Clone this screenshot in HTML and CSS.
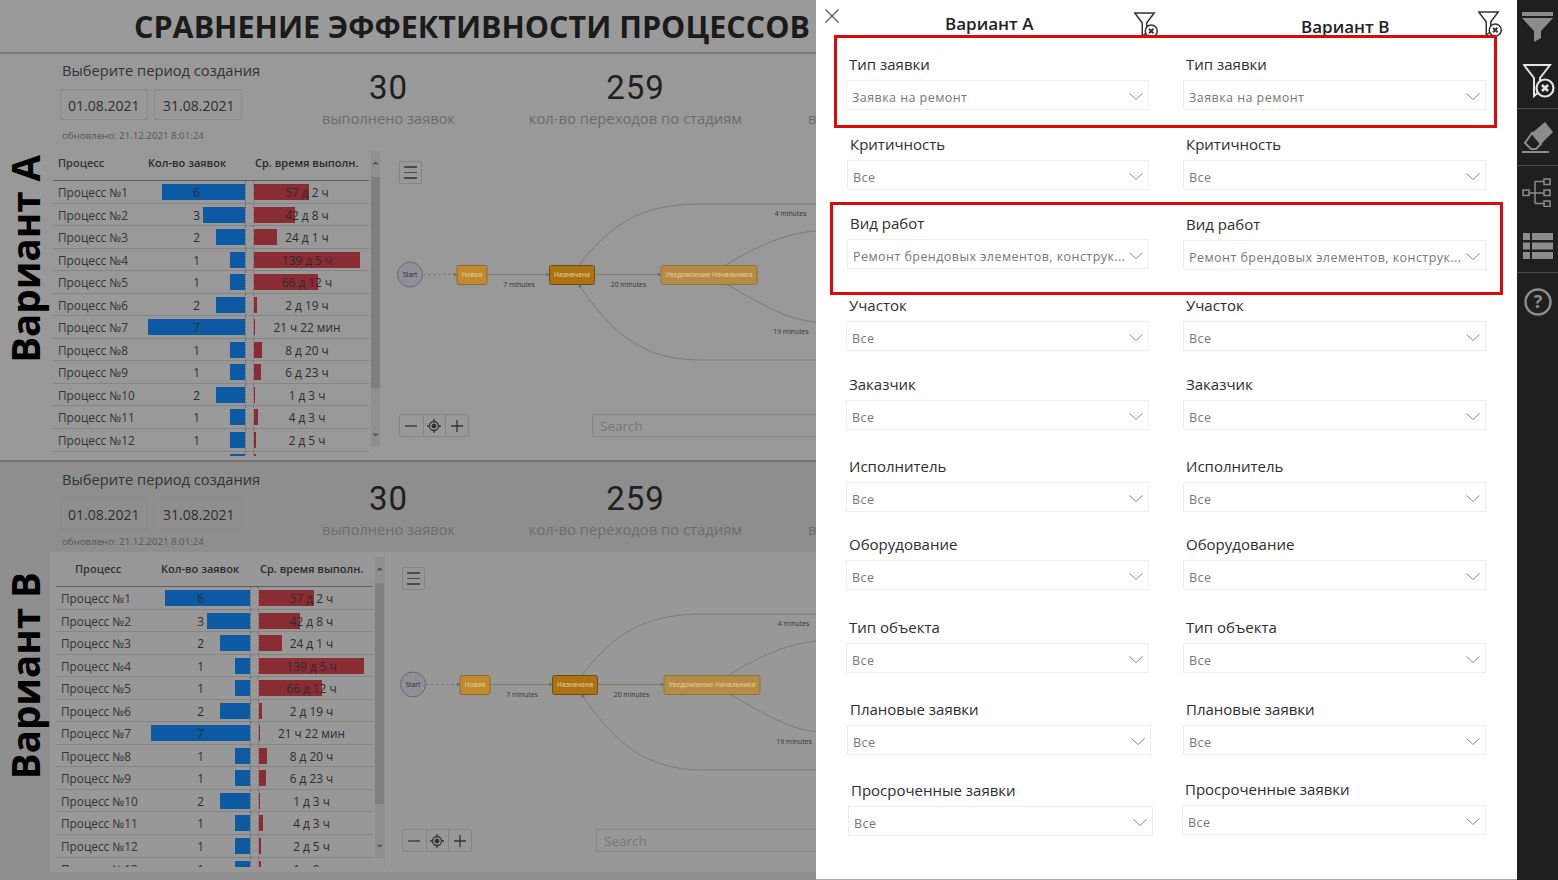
FILE: index.html
```html
<!DOCTYPE html>
<html lang="ru">
<head>
    <meta charset="UTF-8">
    <title>Сравнение эффективности процессов</title>
    <link rel="stylesheet" href="styles.css">
</head>
<body>

<div class="report">
    <h1 class="title">СРАВНЕНИЕ ЭФФЕКТИВНОСТИ ПРОЦЕССОВ</h1>

    <!-- Вариант А -->
    <section class="sec sec-a">
        <div class="side"><span>Вариант А</span></div>
        <div class="main">
            <div class="top">
                <div class="period">
                    <div class="period-label">Выберите период создания</div>
                    <div class="dates"><span class="date">01.08.2021</span><span class="date date-2">31.08.2021</span></div>
                    <div class="updated">обновлено: 21.12.2021 8:01:24</div>
                </div>
                <div class="kpi kpi-1"><div class="num">30</div><div class="cap">выполнено заявок</div></div>
                <div class="kpi kpi-2"><div class="num">259</div><div class="cap">кол-во переходов по стадиям</div></div>
                <div class="kpi kpi-3"><div class="num">&nbsp;</div><div class="cap">в</div></div>
            </div>
            <div class="body">
                <div class="tbl">
                    <div class="tbl-inner">
                        <div class="row head"><span class="name">Процесс</span><span class="hc">Кол-во заявок</span><span class="ht">Ср. время выполн.</span></div>
                        <div class="row"><span class="name">Процесс №1</span><span class="cnt"><i style="width:86%"></i><b>6</b></span><span class="time"><i style="width:52%"></i><b>57 д 2 ч</b></span></div>
                        <div class="row"><span class="name">Процесс №2</span><span class="cnt"><i style="width:43%"></i><b>3</b></span><span class="time"><i style="width:39%"></i><b>42 д 8 ч</b></span></div>
                        <div class="row"><span class="name">Процесс №3</span><span class="cnt"><i style="width:30%"></i><b>2</b></span><span class="time"><i style="width:22%"></i><b>24 д 1 ч</b></span></div>
                        <div class="row"><span class="name">Процесс №4</span><span class="cnt"><i style="width:15%"></i><b>1</b></span><span class="time"><i style="width:100%"></i><b>139 д 5 ч</b></span></div>
                        <div class="row"><span class="name">Процесс №5</span><span class="cnt"><i style="width:15%"></i><b>1</b></span><span class="time"><i style="width:60%"></i><b>66 д 12 ч</b></span></div>
                        <div class="row"><span class="name">Процесс №6</span><span class="cnt"><i style="width:30%"></i><b>2</b></span><span class="time"><i style="width:3%"></i><b>2 д 19 ч</b></span></div>
                        <div class="row"><span class="name">Процесс №7</span><span class="cnt"><i style="width:100%"></i><b>7</b></span><span class="time"><i style="width:1%"></i><b>21 ч 22 мин</b></span></div>
                        <div class="row"><span class="name">Процесс №8</span><span class="cnt"><i style="width:15%"></i><b>1</b></span><span class="time"><i style="width:8%"></i><b>8 д 20 ч</b></span></div>
                        <div class="row"><span class="name">Процесс №9</span><span class="cnt"><i style="width:15%"></i><b>1</b></span><span class="time"><i style="width:7%"></i><b>6 д 23 ч</b></span></div>
                        <div class="row"><span class="name">Процесс №10</span><span class="cnt"><i style="width:30%"></i><b>2</b></span><span class="time"><i style="width:1%"></i><b>1 д 3 ч</b></span></div>
                        <div class="row"><span class="name">Процесс №11</span><span class="cnt"><i style="width:15%"></i><b>1</b></span><span class="time"><i style="width:4%"></i><b>4 д 3 ч</b></span></div>
                        <div class="row"><span class="name">Процесс №12</span><span class="cnt"><i style="width:15%"></i><b>1</b></span><span class="time"><i style="width:2%"></i><b>2 д 5 ч</b></span></div>
                        <div class="row"><span class="name"></span><span class="cnt"><i style="width:15%"></i></span><span class="time"><i style="width:2%"></i></span></div>
                    </div>
                    <div class="scroll"><span class="arrow">&#8963;</span><div class="thumb"></div><span class="arrow arrow-down">&#8964;</span></div>
                </div>
                <div class="map">
                    <svg class="flow" viewBox="385 150 431 300" width="431" height="300">
                        <path class="edge" d="M579 265C610 225 640 204 700 204H816"/>
                        <path class="edge" d="M726 265C755 247 785 233 816 231"/>
                        <path class="edge" d="M726 284C755 300 785 320 816 322"/>
                        <path class="edge" d="M816 360H700C640 360 610 330 579 285"/>
                        <path class="edge dash" d="M423 274.5H456"/>
                        <path class="edge" d="M487 274.5H549"/>
                        <path class="edge" d="M594 274.5H660"/>
                        <path class="tip" d="M457 274.5l-3-2v4zM549.5 274.5l-3-2v4zM661 274.5l-3-2v4zM578 284l1 4 3-2z"/>
                        <circle class="start" cx="410" cy="274.5" r="12.5"/>
                        <text class="start-t" x="410" y="277" text-anchor="middle">Start</text>
                        <rect class="n1" x="457" y="265.5" width="30" height="19" rx="2"/>
                        <text class="nt" x="472" y="277" text-anchor="middle">Новая</text>
                        <rect class="n2" x="549.5" y="265.5" width="45" height="19" rx="2"/>
                        <text class="nt" x="572" y="277" text-anchor="middle">Назначена</text>
                        <rect class="n3" x="661" y="265.5" width="96" height="19" rx="2"/>
                        <text class="nt" x="709" y="277" text-anchor="middle">Уведомление Начальника</text>
                        <text class="el" x="519" y="287" text-anchor="middle">7 minutes</text>
                        <text class="el" x="628.5" y="287" text-anchor="middle">20 minutes</text>
                        <text class="el" x="790.5" y="216" text-anchor="middle">4 minutes</text>
                        <text class="el" x="791" y="334" text-anchor="middle">19 minutes</text>
                    </svg>
                    <div class="menu-btn"><span></span><span></span><span></span></div>
                    <div class="zoom-ctl">
                        <div class="zb"><svg width="12" height="12" viewBox="0 0 12 12"><path d="M0 6h12"/></svg></div>
                        <div class="zb"><svg width="14" height="14" viewBox="0 0 14 14"><circle cx="7" cy="7" r="4.5"/><circle class="dot" cx="7" cy="7" r="1.8"/><path d="M7 0v2.5M7 11.5V14M0 7h2.5M11.5 7H14"/></svg></div>
                        <div class="zb"><svg width="12" height="12" viewBox="0 0 12 12"><path d="M0 6h12M6 0v12"/></svg></div>
                    </div>
                    <div class="search">Search</div>
                </div>
            </div>
        </div>
    </section>

    <!-- Вариант В -->
    <section class="sec sec-b">
        <div class="side"><span>Вариант В</span></div>
        <div class="main">
            <div class="top">
                <div class="period">
                    <div class="period-label">Выберите период создания</div>
                    <div class="dates"><span class="date">01.08.2021</span><span class="date date-2">31.08.2021</span></div>
                    <div class="updated">обновлено: 21.12.2021 8:01:24</div>
                </div>
                <div class="kpi kpi-1"><div class="num">30</div><div class="cap">выполнено заявок</div></div>
                <div class="kpi kpi-2"><div class="num">259</div><div class="cap">кол-во переходов по стадиям</div></div>
                <div class="kpi kpi-3"><div class="num">&nbsp;</div><div class="cap">в</div></div>
            </div>
            <div class="body">
                <div class="tbl">
                    <div class="tbl-inner">
                        <div class="row head"><span class="name">Процесс</span><span class="hc">Кол-во заявок</span><span class="ht">Ср. время выполн.</span></div>
                        <div class="row"><span class="name">Процесс №1</span><span class="cnt"><i style="width:86%"></i><b>6</b></span><span class="time"><i style="width:52%"></i><b>57 д 2 ч</b></span></div>
                        <div class="row"><span class="name">Процесс №2</span><span class="cnt"><i style="width:43%"></i><b>3</b></span><span class="time"><i style="width:39%"></i><b>42 д 8 ч</b></span></div>
                        <div class="row"><span class="name">Процесс №3</span><span class="cnt"><i style="width:30%"></i><b>2</b></span><span class="time"><i style="width:22%"></i><b>24 д 1 ч</b></span></div>
                        <div class="row"><span class="name">Процесс №4</span><span class="cnt"><i style="width:15%"></i><b>1</b></span><span class="time"><i style="width:100%"></i><b>139 д 5 ч</b></span></div>
                        <div class="row"><span class="name">Процесс №5</span><span class="cnt"><i style="width:15%"></i><b>1</b></span><span class="time"><i style="width:60%"></i><b>66 д 12 ч</b></span></div>
                        <div class="row"><span class="name">Процесс №6</span><span class="cnt"><i style="width:30%"></i><b>2</b></span><span class="time"><i style="width:3%"></i><b>2 д 19 ч</b></span></div>
                        <div class="row"><span class="name">Процесс №7</span><span class="cnt"><i style="width:100%"></i><b>7</b></span><span class="time"><i style="width:1%"></i><b>21 ч 22 мин</b></span></div>
                        <div class="row"><span class="name">Процесс №8</span><span class="cnt"><i style="width:15%"></i><b>1</b></span><span class="time"><i style="width:8%"></i><b>8 д 20 ч</b></span></div>
                        <div class="row"><span class="name">Процесс №9</span><span class="cnt"><i style="width:15%"></i><b>1</b></span><span class="time"><i style="width:7%"></i><b>6 д 23 ч</b></span></div>
                        <div class="row"><span class="name">Процесс №10</span><span class="cnt"><i style="width:30%"></i><b>2</b></span><span class="time"><i style="width:1%"></i><b>1 д 3 ч</b></span></div>
                        <div class="row"><span class="name">Процесс №11</span><span class="cnt"><i style="width:15%"></i><b>1</b></span><span class="time"><i style="width:4%"></i><b>4 д 3 ч</b></span></div>
                        <div class="row"><span class="name">Процесс №12</span><span class="cnt"><i style="width:15%"></i><b>1</b></span><span class="time"><i style="width:2%"></i><b>2 д 5 ч</b></span></div>
                        <div class="row"><span class="name">Процесс №13</span><span class="cnt"><i style="width:15%"></i><b>1</b></span><span class="time"><i style="width:2%"></i><b>1 д 9 ч</b></span></div>
                    </div>
                    <div class="scroll"><span class="arrow">&#8963;</span><div class="thumb"></div><span class="arrow arrow-down">&#8964;</span></div>
                </div>
                <div class="map">
                    <svg class="flow" viewBox="385 150 431 300" width="431" height="300">
                        <path class="edge" d="M579 265C610 225 640 204 700 204H816"/>
                        <path class="edge" d="M726 265C755 247 785 233 816 231"/>
                        <path class="edge" d="M726 284C755 300 785 320 816 322"/>
                        <path class="edge" d="M816 360H700C640 360 610 330 579 285"/>
                        <path class="edge dash" d="M423 274.5H456"/>
                        <path class="edge" d="M487 274.5H549"/>
                        <path class="edge" d="M594 274.5H660"/>
                        <path class="tip" d="M457 274.5l-3-2v4zM549.5 274.5l-3-2v4zM661 274.5l-3-2v4zM578 284l1 4 3-2z"/>
                        <circle class="start" cx="410" cy="274.5" r="12.5"/>
                        <text class="start-t" x="410" y="277" text-anchor="middle">Start</text>
                        <rect class="n1" x="457" y="265.5" width="30" height="19" rx="2"/>
                        <text class="nt" x="472" y="277" text-anchor="middle">Новая</text>
                        <rect class="n2" x="549.5" y="265.5" width="45" height="19" rx="2"/>
                        <text class="nt" x="572" y="277" text-anchor="middle">Назначена</text>
                        <rect class="n3" x="661" y="265.5" width="96" height="19" rx="2"/>
                        <text class="nt" x="709" y="277" text-anchor="middle">Уведомление Начальника</text>
                        <text class="el" x="519" y="287" text-anchor="middle">7 minutes</text>
                        <text class="el" x="628.5" y="287" text-anchor="middle">20 minutes</text>
                        <text class="el" x="790.5" y="216" text-anchor="middle">4 minutes</text>
                        <text class="el" x="791" y="334" text-anchor="middle">19 minutes</text>
                    </svg>
                    <div class="menu-btn"><span></span><span></span><span></span></div>
                    <div class="zoom-ctl">
                        <div class="zb"><svg width="12" height="12" viewBox="0 0 12 12"><path d="M0 6h12"/></svg></div>
                        <div class="zb"><svg width="14" height="14" viewBox="0 0 14 14"><circle cx="7" cy="7" r="4.5"/><circle class="dot" cx="7" cy="7" r="1.8"/><path d="M7 0v2.5M7 11.5V14M0 7h2.5M11.5 7H14"/></svg></div>
                        <div class="zb"><svg width="12" height="12" viewBox="0 0 12 12"><path d="M0 6h12M6 0v12"/></svg></div>
                    </div>
                    <div class="search">Search</div>
                </div>
            </div>
        </div>
    </section>
</div>

<!-- Панель фильтров -->
<aside class="panel">
    <div class="phead">
        <svg class="close" width="14" height="14" viewBox="0 0 14 14"><path d="M0.5 0.5l13 13M13.5 0.5l-13 13"/></svg>
        <div class="ptitle ptitle-a">Вариант А</div>
        <svg class="clear clear-a" width="24" height="26" viewBox="0 0 32 34"><path d="M1 1H27L17 14V27L11 32V14Z"/><circle cx="23" cy="25" r="8"/><path class="x" d="M20 22l6 6M26 22l-6 6"/></svg>
        <div class="ptitle ptitle-b">Вариант В</div>
        <svg class="clear clear-b" width="24" height="26" viewBox="0 0 32 34"><path d="M1 1H27L17 14V27L11 32V14Z"/><circle cx="23" cy="25" r="8"/><path class="x" d="M20 22l6 6M26 22l-6 6"/></svg>
    </div>
    <div class="filters">
        <div class="f"><label>Тип заявки</label><div class="dd"><span>Заявка на ремонт</span><svg width="14" height="7" viewBox="0 0 14 7"><path d="M0.5 0.5L7 6.5L13.5 0.5"/></svg></div></div>
        <div class="f"><label>Тип заявки</label><div class="dd"><span>Заявка на ремонт</span><svg width="14" height="7" viewBox="0 0 14 7"><path d="M0.5 0.5L7 6.5L13.5 0.5"/></svg></div></div>

        <div class="f shift-1"><label>Критичность</label><div class="dd"><span>Все</span><svg width="14" height="7" viewBox="0 0 14 7"><path d="M0.5 0.5L7 6.5L13.5 0.5"/></svg></div></div>
        <div class="f"><label>Критичность</label><div class="dd"><span>Все</span><svg width="14" height="7" viewBox="0 0 14 7"><path d="M0.5 0.5L7 6.5L13.5 0.5"/></svg></div></div>

        <div class="f shift-1 up"><label>Вид работ</label><div class="dd"><span>Ремонт брендовых элементов, конструк...</span><svg width="14" height="7" viewBox="0 0 14 7"><path d="M0.5 0.5L7 6.5L13.5 0.5"/></svg></div></div>
        <div class="f"><label>Вид работ</label><div class="dd"><span>Ремонт брендовых элементов, конструк...</span><svg width="14" height="7" viewBox="0 0 14 7"><path d="M0.5 0.5L7 6.5L13.5 0.5"/></svg></div></div>

        <div class="f"><label>Участок</label><div class="dd"><span>Все</span><svg width="14" height="7" viewBox="0 0 14 7"><path d="M0.5 0.5L7 6.5L13.5 0.5"/></svg></div></div>
        <div class="f"><label>Участок</label><div class="dd"><span>Все</span><svg width="14" height="7" viewBox="0 0 14 7"><path d="M0.5 0.5L7 6.5L13.5 0.5"/></svg></div></div>

        <div class="f"><label>Заказчик</label><div class="dd"><span>Все</span><svg width="14" height="7" viewBox="0 0 14 7"><path d="M0.5 0.5L7 6.5L13.5 0.5"/></svg></div></div>
        <div class="f"><label>Заказчик</label><div class="dd"><span>Все</span><svg width="14" height="7" viewBox="0 0 14 7"><path d="M0.5 0.5L7 6.5L13.5 0.5"/></svg></div></div>

        <div class="f"><label>Исполнитель</label><div class="dd"><span>Все</span><svg width="14" height="7" viewBox="0 0 14 7"><path d="M0.5 0.5L7 6.5L13.5 0.5"/></svg></div></div>
        <div class="f"><label>Исполнитель</label><div class="dd"><span>Все</span><svg width="14" height="7" viewBox="0 0 14 7"><path d="M0.5 0.5L7 6.5L13.5 0.5"/></svg></div></div>

        <div class="f"><label>Оборудование</label><div class="dd"><span>Все</span><svg width="14" height="7" viewBox="0 0 14 7"><path d="M0.5 0.5L7 6.5L13.5 0.5"/></svg></div></div>
        <div class="f"><label>Оборудование</label><div class="dd"><span>Все</span><svg width="14" height="7" viewBox="0 0 14 7"><path d="M0.5 0.5L7 6.5L13.5 0.5"/></svg></div></div>

        <div class="f"><label>Тип объекта</label><div class="dd"><span>Все</span><svg width="14" height="7" viewBox="0 0 14 7"><path d="M0.5 0.5L7 6.5L13.5 0.5"/></svg></div></div>
        <div class="f"><label>Тип объекта</label><div class="dd"><span>Все</span><svg width="14" height="7" viewBox="0 0 14 7"><path d="M0.5 0.5L7 6.5L13.5 0.5"/></svg></div></div>

        <div class="f shift-1 wide-1"><label>Плановые заявки</label><div class="dd"><span>Все</span><svg width="14" height="7" viewBox="0 0 14 7"><path d="M0.5 0.5L7 6.5L13.5 0.5"/></svg></div></div>
        <div class="f"><label>Плановые заявки</label><div class="dd"><span>Все</span><svg width="14" height="7" viewBox="0 0 14 7"><path d="M0.5 0.5L7 6.5L13.5 0.5"/></svg></div></div>

        <div class="f shift-2 wide-2"><label>Просроченные заявки</label><div class="dd"><span>Все</span><svg width="14" height="7" viewBox="0 0 14 7"><path d="M0.5 0.5L7 6.5L13.5 0.5"/></svg></div></div>
        <div class="f shift-back up"><label>Просроченные заявки</label><div class="dd"><span>Все</span><svg width="14" height="7" viewBox="0 0 14 7"><path d="M0.5 0.5L7 6.5L13.5 0.5"/></svg></div></div>
    </div>
    <div class="mark mark-1"></div>
    <div class="mark mark-2"></div>
</aside>

<!-- Правая полоса -->
<nav class="rail">
    <svg class="ic ic-funnel" width="31" height="30" viewBox="0 0 31 30"><path class="fill" d="M0 0H31V4H0ZM0 6H31L19 19V26L12 30V19Z"/></svg>
    <svg class="ic ic-clear" width="32" height="34" viewBox="0 0 32 34"><path d="M1 1H27L17 14V27L11 32V14Z"/><circle cx="22" cy="24" r="8.5"/><path class="x" d="M19 21l6 6M25 21l-6 6"/></svg>
    <div class="sep sep-1"></div>
    <svg class="ic ic-eraser" width="31" height="31" viewBox="0 0 31 31"><path class="fill" d="M23 0L31 10L19 22L10 11Z"/><path d="M10 11L19 22L14 27H9L3 21ZM0 30H27"/></svg>
    <div class="sep sep-2"></div>
    <svg class="ic ic-tree" width="30" height="29" viewBox="0 0 30 29"><path d="M1 12h6v5.5H1zM7 15h15M13 3.500v22M13 3.500h9M13 25.500h9M22 1h6v5.500h-6zM22 12h6v5.500h-6zM22 23h6v5.500h-6z"/></svg>
    <svg class="ic ic-table" width="30" height="26" viewBox="0 0 30 26"><path class="fill" d="M0 0h7v7H0zM9 0h21v7H9zM0 9.500h7v7H0zM9 9.500h21v7H9zM0 19h7v7H0zM9 19h21v7H9z"/></svg>
    <div class="sep sep-3"></div>
    <svg class="ic ic-help" width="28" height="28" viewBox="0 0 28 28"><circle cx="14" cy="14" r="12.5"/><text x="14" y="20" text-anchor="middle">?</text></svg>
</nav>

</body>
</html>
```

FILE: styles.css
```css
* {
    box-sizing: border-box;
}
html, body {
    margin: 0;
    height: 880px;
    overflow: hidden;
}
body {
    display: flex;
    width: 1558px;
    font-family: "Open Sans", "Noto Sans", sans-serif;
    color: #222;
    background-color: #8e8e8e;
}

/* report behind the panel */
.report {
    width: 816px;
    height: 880px;
    overflow: hidden;
    background-color: #8e8e8e;
}
.title {
    margin: 0;
    height: 54px;
    padding: 5px 0 0 134px;
    font-size: 30.5px;
    line-height: 42px;
    font-weight: 700;
    white-space: nowrap;
    color: #1b1b1b;
    background-color: #9a9a9a;
    border-bottom: 2px solid #7a7a7a;
}
.sec {
    display: flex;
    overflow: hidden;
}
.sec-a {
    height: 408px;
    background-color: #999;
    border-bottom: 2px solid #777;
}
.sec-b {
    height: 410px;
    background-color: #8e8e8e;
}
.side {
    width: 50px;
    flex: none;
    display: flex;
    justify-content: center;
    align-items: flex-start;
}
.side span {
    writing-mode: vertical-rl;
    transform: rotate(180deg);
    font-size: 38.5px;
    line-height: 50px;
    font-weight: 700;
    white-space: nowrap;
    color: #000;
}
.sec-a .side span {
    margin-top: 101px;
}
.sec-b .side span {
    margin-top: 110px;
}
.main {
    width: 766px;
    flex: none;
}

/* top row: period and numbers */
.top {
    display: flex;
    height: 96px;
    white-space: nowrap;
}
.sec-b .top {
    height: 90px;
}
.period {
    width: 272px;
    flex: none;
    padding: 6px 0 0 12px;
}
.period-label {
    font-size: 14.7px;
    line-height: 20px;
    color: #333;
}
.dates {
    display: flex;
    margin: 9px 0 0 -2px;
}
.date {
    width: 88px;
    height: 31px;
    padding-left: 7px;
    font-size: 14px;
    line-height: 32px;
    color: #2e2e2e;
    border: 1px solid #8b8b8b;
}
.date-2 {
    margin-left: 6px;
    padding-left: 8px;
}
.sec-b .period {
    padding-top: 7px;
}
.sec-b .date {
    border-color: #8a8a8a;
}
.updated {
    margin-top: 9px;
    font-size: 9.7px;
    line-height: 14px;
    color: #555;
}
.sec-b .updated {
    margin-top: 6px;
}
.kpi {
    flex: none;
    text-align: center;
}
.kpi-1 {
    width: 133px;
}
.kpi-2 {
    width: 215px;
    margin-left: 73px;
}
.kpi-3 {
    width: 20px;
    margin-left: 65px;
    text-align: left;
}
.num {
    margin-top: 13px;
    font-family: Roboto, sans-serif;
    font-size: 33px;
    line-height: 42px;
    letter-spacing: 1px;
    color: #202020;
}
.cap {
    margin-top: -2px;
    font-size: 14.8px;
    line-height: 22px;
    color: #6c6c6c;
}
.kpi-1 .cap {
    font-size: 14.6px;
}
.sec-b .num {
    margin-top: 16px;
}

/* table + map row */
.body {
    display: flex;
    height: 310px;
}
.sec-b .body {
    height: 320px;
    background-color: #989898;
}
.tbl {
    width: 335px;
    flex: none;
    display: flex;
    padding: 0 0 0 3px;
    overflow: hidden;
}
.sec-a .tbl {
    height: 306px;
}
.sec-b .tbl {
    height: 315px;
    padding: 5px 0 0 6px;
    border-right: 1px solid #929292;
}
.tbl-inner {
    width: 316px;
    flex: none;
    overflow: hidden;
}
.sec-b .tbl-inner {
    width: 317px;
}
.row {
    display: grid;
    grid-template-columns: 88px 98px 107px;
    column-gap: 7px;
    height: 22.55px;
    align-items: stretch;
    font-size: 11.8px;
    line-height: 22px;
    color: #2c2c2c;
    border-bottom: 1px solid #858585;
}
.row.head {
    height: 31px;
    padding-bottom: 4px;
    align-items: center;
    font-size: 11px;
    font-weight: 600;
    color: #2a2a2a;
    border-bottom: 1px solid #5e5e5e;
}
.sec-b .row {
    grid-template-columns: 88px 100px 106px;
}
.sec-b .row.head {
    height: 30px;
    padding-bottom: 5px;
}
.sec-b .row.head .name {
    padding-left: 19px;
}
.sec-b .hc {
    padding-left: 10px;
}
.name {
    padding-left: 5px;
    white-space: nowrap;
    color: #333;
}
.hc, .ht {
    white-space: nowrap;
}
.ht {
    padding-left: 2px;
}
.cnt, .time {
    display: grid;
    align-items: center;
}
.cnt {
    border-right: 1px dotted #666;
}
.time {
    border-left: 1px dotted #96666a;
}
.cnt i, .time i {
    grid-area: 1 / 1;
    height: 16px;
}
.cnt i {
    justify-self: end;
    background-color: #0b5aa3;
}
.time i {
    justify-self: start;
    background-color: #8a2c34;
}
.cnt b, .time b {
    grid-area: 1 / 1;
    z-index: 1;
    text-align: center;
    font-weight: 400;
    white-space: nowrap;
}
.scroll {
    width: 9px;
    height: 296px;
    flex: none;
    margin: 1px 0 0 2px;
    position: relative;
    background-color: #8f8f8f;
    font-size: 11px;
    line-height: 10px;
    text-align: center;
}
.sec-b .scroll {
    height: 301px;
    margin-top: 0;
}
.arrow {
    display: block;
    height: 26px;
    padding-top: 10px;
    color: #333;
}
.arrow-down {
    position: absolute;
    left: 0;
    right: 0;
    bottom: 6px;
    height: 14px;
    padding-top: 0;
}
.thumb {
    height: 211px;
    background-color: #7f7f7f;
}
.sec-b .thumb {
    height: 221px;
}

/* process map */
.map {
    position: relative;
    flex: 1;
    overflow: hidden;
}
.flow {
    position: absolute;
    left: 0;
    top: 0;
}
.sec-b .flow {
    left: 3px;
    top: 8px;
}
.edge {
    fill: none;
    stroke: #7f7a70;
    stroke-width: 1;
}
.dash {
    stroke-dasharray: 3 2;
}
.tip {
    fill: #6f6a60;
}
.start {
    fill: #90909a;
    stroke: #6a6a74;
}
.start-t {
    font-size: 6.5px;
    fill: #2b2b2b;
}
.n1 {
    fill: #c18a2f;
    stroke: #8d6b2d;
}
.n2 {
    fill: #ad7212;
    stroke: #6a4e1a;
}
.n3 {
    fill: #b58c46;
    stroke: #8f733c;
}
.nt {
    font-size: 6.5px;
    font-weight: 600;
    fill: #e2c68c;
}
.el {
    font-size: 6.8px;
    fill: #333;
}
.menu-btn {
    position: absolute;
    left: 14px;
    top: 11px;
    width: 23px;
    height: 23px;
    display: flex;
    flex-direction: column;
    justify-content: center;
    gap: 4px;
    padding: 0 4px;
    border: 1px solid #858585;
    border-radius: 2px;
}
.menu-btn span {
    height: 1.5px;
    background-color: #4a4a4a;
}
.sec-b .menu-btn {
    left: 17px;
    top: 15px;
}
.zoom-ctl {
    position: absolute;
    left: 14px;
    top: 264px;
    display: flex;
    height: 23px;
    border: 1px solid #858585;
    border-radius: 2px;
}
.sec-b .zoom-ctl {
    left: 17px;
    top: 277px;
}
.zb {
    width: 22.5px;
    display: flex;
    align-items: center;
    justify-content: center;
    border-left: 1px solid #858585;
}
.zb:first-child {
    border-left: none;
}
.zb svg {
    fill: none;
    stroke: #333;
    stroke-width: 1.3;
}
.zb .dot {
    fill: #333;
}
.search {
    position: absolute;
    left: 207px;
    top: 264px;
    width: 300px;
    height: 23px;
    padding-left: 7px;
    font-size: 13.5px;
    line-height: 22px;
    color: #767676;
    border: 1px solid #858585;
    border-radius: 2px;
}
.sec-b .search {
    left: 211px;
    top: 277px;
}

/* filter panel */
.panel {
    position: relative;
    width: 701px;
    height: 880px;
    flex: none;
    background-color: #fff;
    border-bottom: 1px solid #aaa;
}
.phead {
    display: flex;
    height: 54px;
}
.close {
    margin: 9px 0 0 9px;
    fill: none;
    stroke: #555;
    stroke-width: 1.2;
}
.ptitle {
    font-size: 17px;
    line-height: 22px;
    font-weight: 600;
    white-space: nowrap;
    color: #222;
}
.ptitle-a {
    width: 189px;
    margin: 13px 0 0 106px;
}
.ptitle-b {
    width: 177px;
    margin: 16px 0 0 143px;
}
.clear {
    fill: none;
    stroke: #333;
    stroke-width: 2;
}
.clear circle {
    fill: #fff;
}
.clear .x {
    stroke-width: 2.4;
}
.clear-a {
    margin-top: 12px;
}
.clear-b {
    margin-top: 11px;
}
.filters {
    display: grid;
    grid-template-columns: 303px 303px;
    grid-template-rows: 80px 80px 81px 79px 82px 78px 83px 82px 81px auto;
    column-gap: 34px;
    padding-left: 30px;
}
.f label {
    display: block;
    height: 20px;
    margin: 0 0 6px 3px;
    font-size: 15px;
    line-height: 20px;
    color: #2e2e2e;
}
.shift-1 {
    margin-left: 1px;
}
.wide-1 {
    width: 304px;
}
.shift-2 {
    margin-left: 2px;
}
.wide-2 {
    width: 305px;
}
.shift-back {
    margin-left: -1px;
}
.up {
    margin-top: -1px;
}
.dd {
    display: flex;
    align-items: center;
    justify-content: space-between;
    height: 30px;
    padding: 0 5px;
    font-size: 12.5px;
    letter-spacing: 0.45px;
    color: #777;
    border: 1px solid #eee;
}
.dd span {
    white-space: nowrap;
    overflow: hidden;
    margin-top: 5px;
}
.dd svg {
    flex: none;
    margin-top: 3px;
    fill: none;
    stroke: #888;
    stroke-width: 1;
}
.mark {
    position: absolute;
    border: 3px solid #dc0a0a;
}
.mark-1 {
    left: 18px;
    top: 35px;
    width: 663px;
    height: 93px;
}
.mark-2 {
    left: 14px;
    top: 202px;
    width: 673px;
    height: 93px;
}

/* dark rail */
.rail {
    width: 41px;
    height: 880px;
    flex: none;
    display: flex;
    flex-direction: column;
    background-color: #1f1f1f;
}
.ic {
    flex: none;
    fill: none;
    stroke: #8c8c8c;
    stroke-width: 2;
}
.ic .fill {
    fill: #8c8c8c;
    stroke: none;
}
.sep {
    height: 1px;
    flex: none;
    background-color: #4a4a4a;
}
.ic-funnel {
    margin: 12px 0 0 5px;
}
.ic-clear {
    margin: 22px 0 0 6px;
    stroke: #e4e4e4;
}
.ic-clear circle {
    fill: #1f1f1f;
    stroke-width: 2.2;
}
.ic-clear .x {
    stroke-width: 2.6;
}
.sep-1 {
    margin-top: 10px;
}
.ic-eraser {
    margin: 13px 0 0 5px;
}
.sep-2 {
    margin-top: 12px;
}
.ic-tree {
    margin: 12px 0 0 5px;
    stroke-width: 1.5;
}
.ic-table {
    margin: 26px 0 0 6px;
}
.sep-3 {
    margin-top: 13px;
}
.ic-help {
    margin: 15px 0 0 7px;
    stroke-width: 2.5;
}
.ic-help text {
    font-size: 18px;
    font-weight: 700;
    fill: #8c8c8c;
    stroke: none;
}
```
